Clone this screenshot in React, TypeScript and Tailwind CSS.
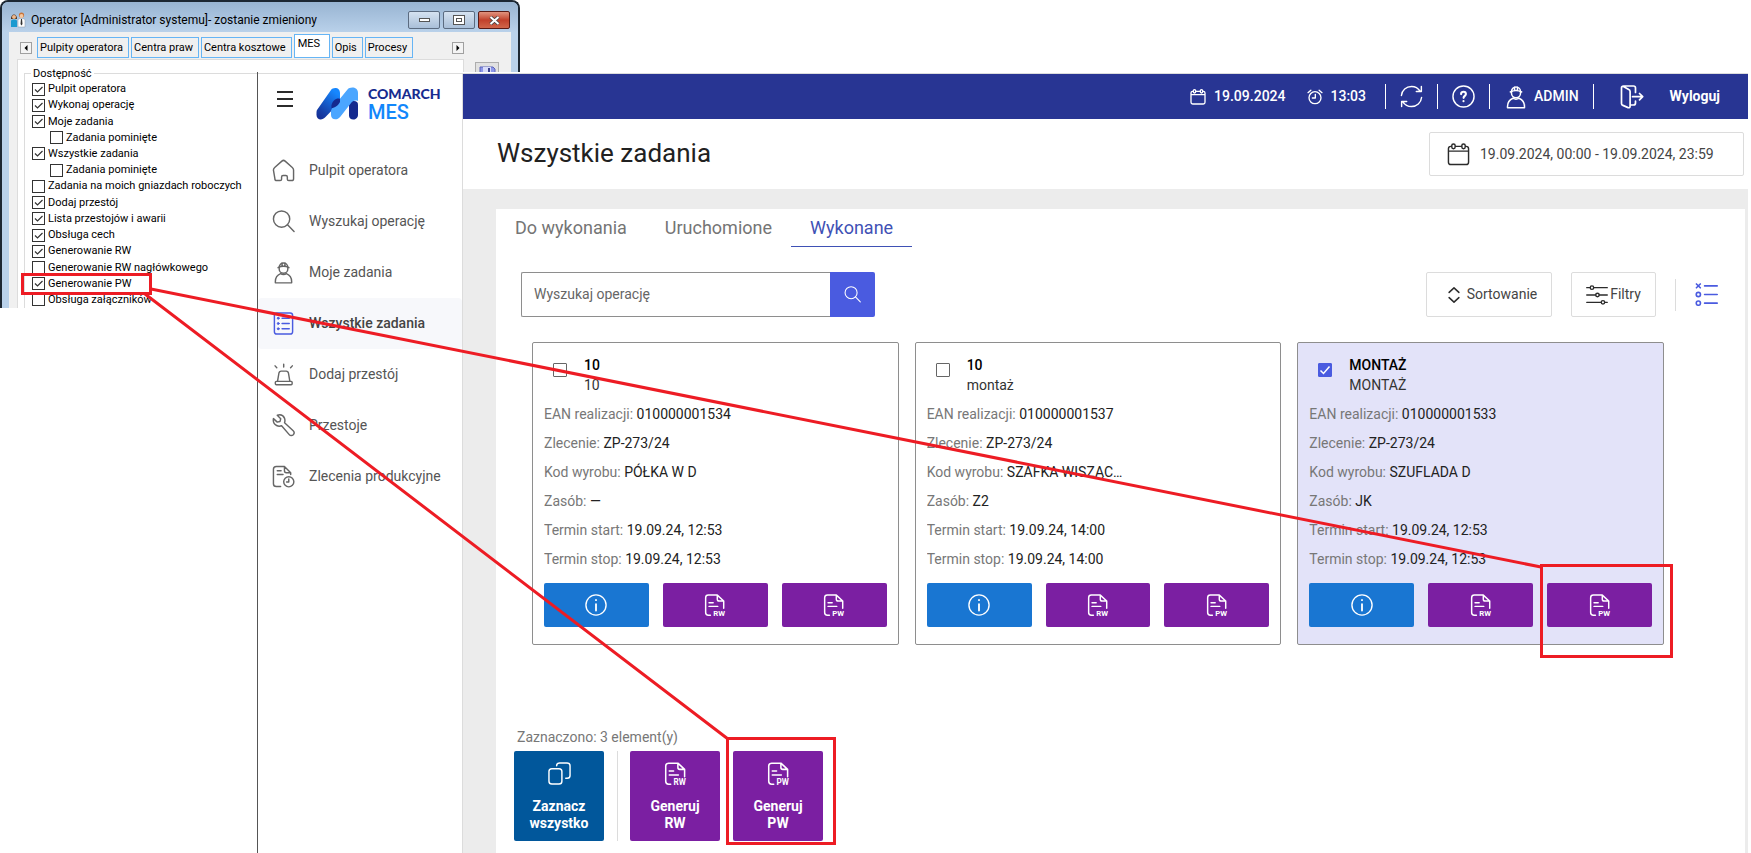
import React, { useState } from 'react';

interface IconProps {
  className?: string;
}

interface Task {
  id: string;
  name: string;
  description: string;
  ean: string;
  order: string;
  product: string;
  resource: string;
  start: string;
  stop: string;
}

interface Permission {
  label: string;
  on: boolean;
  nested?: boolean;
}

const PERMISSIONS: Permission[] = [
  { label: 'Pulpit operatora', on: true },
  { label: 'Wykonaj operację', on: true },
  { label: 'Moje zadania', on: true },
  { label: 'Zadania pominięte', on: false, nested: true },
  { label: 'Wszystkie zadania', on: true },
  { label: 'Zadania pominięte', on: false, nested: true },
  { label: 'Zadania na moich gniazdach roboczych', on: false },
  { label: 'Dodaj przestój', on: true },
  { label: 'Lista przestojów i awarii', on: true },
  { label: 'Obsługa cech', on: true },
  { label: 'Generowanie RW', on: true },
  { label: 'Generowanie RW nagłówkowego', on: false },
  { label: 'Generowanie PW', on: true },
  { label: 'Obsługa załączników', on: false },
];

const TASKS: Task[] = [
  { id: 't1', name: '10', description: '10', ean: '010000001534', order: 'ZP-273/24', product: 'PÓŁKA W D', resource: '—', start: '19.09.24, 12:53', stop: '19.09.24, 12:53' },
  { id: 't2', name: '10', description: 'montaż', ean: '010000001537', order: 'ZP-273/24', product: 'SZAFKA WISZĄC…', resource: 'Z2', start: '19.09.24, 14:00', stop: '19.09.24, 14:00' },
  { id: 't3', name: 'MONTAŻ', description: 'MONTAŻ', ean: '010000001533', order: 'ZP-273/24', product: 'SZUFLADA D', resource: 'JK', start: '19.09.24, 12:53', stop: '19.09.24, 12:53' },
];

/* ---------- icons ---------- */

const Svg: React.FC<IconProps & { children: React.ReactNode; width?: number }> = ({ className, children, width = 1.5 }) => (
  <svg className={className} viewBox="0 0 24 24" fill="none" stroke="currentColor" strokeWidth={width} strokeLinecap="round" strokeLinejoin="round" aria-hidden="true">
    {children}
  </svg>
);

const HomeIcon = ({ className }: IconProps) => (
  <Svg className={className}>
    <path d="M1.5 11.5C1.5 10.3 2 9.6 2.8 8.9L10.3 2.2c1-.9 2.4-.9 3.4 0l7.5 6.7c.8.7 1.3 1.4 1.3 2.6v9c0 1.2-.8 2-2 2h-3c-.9 0-1.5-.6-1.5-1.5v-2.2c0-.9-.6-1.5-1.5-1.500h-3c-.9 0-1.500.6-1.500 1.500V21c0 .9-.6 1.500-1.500 1.500h-3.500c-1.200 0-2-.8-2-2z" />
  </Svg>
);

const SearchIcon = ({ className }: IconProps) => (
  <Svg className={className}>
    <circle cx="10" cy="9.500" r="8.500" />
    <path d="M16.200 15.500l6.800 7" />
  </Svg>
);

const WorkerIcon = ({ className }: IconProps) => (
  <Svg className={className}>
    <path d="M7.500 6.500a4.500 4.500 0 0 1 9 0v1.800a4.500 4.500 0 0 1-9 0z" />
    <path d="M6.300 7c3.400-1.700 8-1.700 11.400 0M10.500 2.200v2.600M13.500 2.200v2.600" />
    <path d="M3.500 22.800v-1.300c0-4 2.300-7 5.500-8.300 1.800 1.200 4.200 1.200 6 0 3.200 1.300 5.500 4.300 5.500 8.300v1.300z" />
  </Svg>
);

const TaskListIcon = ({ className }: IconProps) => (
  <Svg className={className}>
    <rect x="2.500" y="1" width="19" height="22" rx="2.500" />
    <path d="M10.500 6.500h7.500M10.500 12h7.500M10.500 17.500h7.500" />
    <g fill="currentColor" strokeWidth="1">
      <circle cx="6.500" cy="6.500" r="1" />
      <circle cx="6.500" cy="12" r="1" />
      <circle cx="6.500" cy="17.500" r="1" />
    </g>
  </Svg>
);

const AlarmIcon = ({ className }: IconProps) => (
  <Svg className={className}>
    <rect x="3.500" y="19.200" width="17.500" height="3.500" rx="1" />
    <path d="M5.800 19l1.400-8.300c.2-1.300 1-2.200 2.400-2.200h5.200c1.400 0 2.200.9 2.400 2.200L18.600 19M12.200 1.300v3M3.200 3l1.800 2M21.200 3l-1.800 2" />
  </Svg>
);

const WrenchIcon = ({ className }: IconProps) => (
  <Svg className={className}>
    <path d="M1.500 4.800l4 3.700 2.800-.6.800-2.900-3.600-3.700c3-.9 6.200.1 7.500 3 .7 1.600.6 3.200.1 4.800l9 8.300c1.200 1.200 1.200 3 .1 4.200-1.200 1.200-3.100 1.200-4.200-.1l-8-9.200c-1.700.6-3.500.6-5.200-.3-2.700-1.400-3.800-4.300-3.300-7.200z" />
  </Svg>
);

const OrdersIcon = ({ className }: IconProps) => (
  <Svg className={className}>
    <path d="M9 22.500H4.500c-1.700 0-3-1.300-3-3v-15c0-1.700 1.300-3 3-3H13l6.500 6.500v2M13 1.500V6c0 1.200.8 2 2 2h4.500M5.500 6h4M5.500 10h6" />
    <circle cx="17.500" cy="17.500" r="5.300" />
    <path d="M17.500 14.700v3h-2.300" />
  </Svg>
);

const CalendarIcon = ({ className, width }: IconProps & { width?: number }) => (
  <Svg className={className} width={width}>
    <path d="M4.500 3.500h-.5c-1.500 0-2.500 1-2.500 2.500v14c0 1.500 1 2.500 2.500 2.500h16c1.500 0 2.500-1 2.500-2.500V6c0-1.500-1-2.500-2.500-2.500h-.5M9 3.500h6M1.500 8.500h21" />
    <rect x="5" y="1" width="3.500" height="5" rx="1.700" />
    <rect x="15.500" y="1" width="3.500" height="5" rx="1.700" />
  </Svg>
);

const ClockIcon = ({ className }: IconProps) => (
  <Svg className={className} width={2}>
    <circle cx="12" cy="13" r="9" />
    <path d="M12.500 8v5.500H8M1.500 5.500l4.300-3.700M22.500 5.500l-4.300-3.700" />
  </Svg>
);

const RefreshIcon = ({ className }: IconProps) => (
  <Svg className={className}>
    <path d="M1.500 11C2 5.500 6.500 1.500 12 1.500c3.800 0 7 1.800 9 5M22.300 1.500v5.300H17M22.500 13c-.5 5.500-5 9.500-10.500 9.500-3.800 0-7-1.800-9-5M1.700 22.500v-5.300H7" />
  </Svg>
);

const HelpIcon = ({ className }: IconProps) => (
  <Svg className={className}>
    <circle cx="12" cy="12" r="11" />
    <path strokeWidth="2.200" d="M9.500 9.500c0-1.500 1-2.500 2.500-2.500s2.500 1 2.500 2.400c0 1.900-2.400 1.900-2.400 4M12 16.800v.2" />
  </Svg>
);

const DoorIcon = ({ className }: IconProps) => (
  <Svg className={className} width={1.700}>
    <path d="M15.500 7.500V3c0-1.200-.8-2-2-2h-10C2.300 1 1.500 1.800 1.500 3v15.500c0 1 .5 1.600 1.400 1.900l5.200 2.200c1.200.4 2-.1 2-1.400V6.500c0-1-.4-1.600-1.400-2L3 1.300M10.500 20h3c1.200 0 2-.8 2-2v-2M12.500 11.700h10M19.500 8.500l3.200 3.200-3.200 3.200" />
  </Svg>
);

const SortIcon = ({ className }: IconProps) => (
  <Svg className={className} width={2}>
    <path d="M5.500 8.500L12 2.500l6.500 6M5.500 15.500l6.500 6 6.500-6" />
  </Svg>
);

const FilterIcon = ({ className }: IconProps) => (
  <Svg className={className}>
    <path d="M.8 4h3.700M8.500 4h14.700M.8 12h9.700M14.500 12h8.700M.8 20h15.700M20.500 20h2.700" />
    <circle cx="6.500" cy="4" r="1.900" />
    <circle cx="12.500" cy="12" r="1.900" />
    <circle cx="18.500" cy="20" r="1.900" />
  </Svg>
);

const ListModeIcon = ({ className }: IconProps) => (
  <Svg className={className} width={1.7}>
    <path d="M10 3h13.200M10 12h13.200M10 21h13.200M1.500 1l4 4M5.500 1l-4 4" />
    <circle cx="3.500" cy="12" r="2.200" />
    <circle cx="3.500" cy="21" r="2.200" />
  </Svg>
);

const InfoIcon = ({ className }: IconProps) => (
  <Svg className={className}>
    <circle cx="12" cy="12" r="11" />
    <path strokeWidth="2" d="M12 11v7M12 6.500v.2" />
  </Svg>
);

const CopyIcon = ({ className }: IconProps) => (
  <Svg className={className}>
    <rect x="1" y="7" width="13.500" height="16" rx="3" />
    <path d="M9 4c0-1.700 1.300-3 3-3h8c1.700 0 3 1.300 3 3v10c0 1.700-1.300 3-3 3h-1.500" />
  </Svg>
);

const DocIcon = ({ className, code }: IconProps & { code: string }) => (
  <Svg className={className} width={1.6}>
    <path d="M7 23.200H4.800c-1.700 0-3-1.300-3-3v-16c0-1.700 1.300-3 3-3h9.700l7 6.500v7.800M14.500 1.200v4.500c0 1.200.8 2 2 2h5M5.500 9.500h4.500M5.500 13.500h9.500" />
    <text x="10" y="24" fill="currentColor" stroke="none" fontSize="8.5" fontWeight="700" fontFamily="Roboto, sans-serif">{code}</text>
  </Svg>
);

const ComarchLogo = ({ className }: IconProps) => (
  <svg className={className} viewBox="0 0 42 33" aria-hidden="true">
    <defs>
      <linearGradient id="leg" x1="0" y1="1" x2="0.600" y2="0">
        <stop offset="0" stopColor="#152a8f" />
        <stop offset="0.300" stopColor="#1640a8" />
        <stop offset="1" stopColor="#1687ff" />
      </linearGradient>
    </defs>
    <path d="M1 23L15 3c2-2.800 9-3 9 3v9L9.500 30C6 34 0 33 .5 27c0-1.500 0-3 .5-4z" fill="url(#leg)" />
    <path d="M33 14h5c2.500 0 4 1 4 4v10c0 2-1.500 4-3.500 4.500-3 .6-5.500-1-5.500-4z" fill="#152a8f" />
    <path d="M15 25c0-1.500.3-2.500 1.200-3.800L31.500 2.500C34 -.5 42 -.5 42 6v8c-3-1-5.500 0-7.500 2.700L24.500 29.500C21 34 15 33 15 28z" fill="#4ba6ff" />
    <path d="M15.500 21c-.5-3 .5-5.500 2.500-7.500 2-2 4.500-2.300 6-1.500v3c-2 3.500-5 6-8.500 6z" fill="#152a8f" />
  </svg>
);

/* ---------- operator card window ---------- */

const WINDOW_TABS = ['Pulpity operatora', 'Centra praw', 'Centra kosztowe', 'MES', 'Opis', 'Procesy'];

const OperatorWindow: React.FC = () => (
  <section className="absolute left-0 top-0 flex h-[308px] w-[520px] flex-col overflow-hidden rounded-t-lg border-2 border-b-0 border-[#1c2733] bg-[#b9d1ea] px-[7px] font-['Roboto',sans-serif] text-[11px] leading-4 text-black">
    <header className="-mx-[7px] flex h-[30px] shrink-0 items-center bg-gradient-to-b from-[#98b4d2] to-[#b9d1ea] px-2 pt-[6px]">
      <svg className="h-4 w-4 shrink-0" viewBox="0 0 16 16" aria-hidden="true">
        <path d="M1 7c0-6 6-6 6 0z" fill="#4a2a12" />
        <circle cx="4" cy="5" r="2" fill="#f0b98c" />
        <path d="M1 15V9c0-2 6-2 6 0v6z" fill="#1b9ad0" />
        <circle cx="11.500" cy="3" r="2.600" fill="#c9743a" />
        <circle cx="11.500" cy="4" r="1.900" fill="#f6c8a0" />
        <path d="M8 15V8c0-2 7-2 7 0v7z" fill="#fff" stroke="#8894a5" strokeWidth="0.500" />
        <path d="M11 7h1l.5 5-1 1.500-1-1.500z" fill="#333" />
      </svg>
      <h2 className="ml-[5px] flex-1 text-[12px]">Operator [Administrator systemu]- zostanie zmieniony</h2>
      <div className="flex gap-[3px]">
        <button aria-label="Minimalizuj" className="flex h-[18px] w-8 items-center justify-center rounded-xs border border-[#5b6b80] bg-gradient-to-b from-[#d5e2f0] to-[#a9bfd8]">
          <span className="h-1 w-[11px] border border-[#555] bg-white" />
        </button>
        <button aria-label="Maksymalizuj" className="flex h-[18px] w-8 items-center justify-center rounded-xs border border-[#5b6b80] bg-gradient-to-b from-[#d5e2f0] to-[#a9bfd8]">
          <span className="flex h-[10px] w-[12px] items-center justify-center border border-[#555] bg-white">
            <span className="h-1 w-[6px] border border-[#555]" />
          </span>
        </button>
        <button aria-label="Zamknij" className="flex h-[18px] w-8 items-center justify-center rounded-xs border border-[#5a1a15] bg-gradient-to-b from-[#e0937f] via-[#c1402b] to-[#d0654a]">
          <svg className="h-[9px] w-[11px]" viewBox="0 0 11 9" aria-hidden="true">
            <path d="M1.500 1l8 7M9.500 1l-8 7" stroke="#444" strokeWidth="3.600" />
            <path d="M1.500 1l8 7M9.500 1l-8 7" stroke="#fff" strokeWidth="2" />
          </svg>
        </button>
      </div>
    </header>

    <div className="flex flex-1 gap-[11px] bg-[#f0f0f0] pl-2">
      <div className="flex w-[447px] flex-col">
        <nav className="flex h-[27px] items-end pb-px">
          <button aria-label="Poprzednie zakładki" className="mb-1 ml-[3px] mr-[5px] h-3 w-3 border border-[#a0a0a0] bg-[#f4f4f4]">
            <svg viewBox="0 0 10 10" aria-hidden="true"><path d="M6.500 2v6L3.500 5z" /></svg>
          </button>
          <div className="flex flex-1 items-end gap-[2px]">
            {WINDOW_TABS.map(tab => (
              <button
                key={tab}
                className={`whitespace-nowrap border border-[#66b5f5] text-left ${
                  tab === 'MES' ? 'h-6 w-9 bg-white pb-1 pl-[3px]' : 'h-[21px] bg-[#f0f0f0] pl-[2px] pr-[5px]'
                }`}
              >
                {tab}
              </button>
            ))}
          </div>
          <button aria-label="Następne zakładki" className="mb-1 h-3 w-3 border border-[#a0a0a0] bg-[#f4f4f4]">
            <svg viewBox="0 0 10 10" aria-hidden="true"><path d="M3.500 2v6l3-3z" /></svg>
          </button>
        </nav>
        <div className="flex-1 border border-b-0 border-[#dcdcdc] bg-white pl-[6px] pt-[6px]">
          <fieldset className="h-full border border-b-0 border-[#dcdcdc] pl-[7px]">
            <legend className="-ml-px h-[15px] px-[2px] leading-[15px]">Dostępność</legend>
            <div className="flex h-[227px] flex-col">
              {PERMISSIONS.map((p, i) => (
                <label key={i} className={`flex flex-1 items-center gap-[3px] ${p.nested ? 'pl-[18px]' : ''}`}>
                  <span className="relative flex h-[13px] w-[13px]">
                    <input type="checkbox" defaultChecked={p.on} className="peer h-[13px] w-[13px] appearance-none border border-[#333] bg-white" />
                    <svg className="pointer-events-none absolute inset-0 hidden peer-checked:block" viewBox="0 0 13 13" aria-hidden="true">
                      <path d="M3 6.500l2.500 2.500L10.500 4" fill="none" stroke="#333" strokeWidth="1.200" />
                    </svg>
                  </span>
                  {p.label}
                </label>
              ))}
            </div>
          </fieldset>
        </div>
      </div>
      <button aria-label="Zapisz" className="mt-[30px] flex h-6 w-6 items-center justify-center border border-[#adadad] bg-[#e1e1e1]">
        <svg className="h-[17px] w-[17px]" viewBox="0 0 17 17" aria-hidden="true">
          <path d="M1 1h13l2 2v13H1z" fill="#8d97ea" stroke="#5a62b8" />
          <path d="M4 1h8v6H4z" fill="#d8dcfa" />
          <path d="M9 2h2v4H9z" fill="#3b418f" />
        </svg>
      </button>
    </div>
  </section>
);

/* ---------- MES application ---------- */

const NAV = [
  { label: 'Pulpit operatora', Icon: HomeIcon },
  { label: 'Wyszukaj operację', Icon: SearchIcon },
  { label: 'Moje zadania', Icon: WorkerIcon },
  { label: 'Wszystkie zadania', Icon: TaskListIcon, active: true },
  { label: 'Dodaj przestój', Icon: AlarmIcon },
  { label: 'Przestoje', Icon: WrenchIcon },
  { label: 'Zlecenia produkcyjne', Icon: OrdersIcon },
];

const Sidebar: React.FC = () => (
  <aside className="w-[205px] shrink-0 border-r border-[#dcdcdc] bg-white">
    <div className="flex h-[71px] items-start gap-[23px] pl-[19px] pt-[13px]">
      <button aria-label="Menu" className="mt-1 flex w-4 flex-col gap-[5px]">
        <span className="h-0.5 bg-[#2b2b2b]" />
        <span className="h-0.5 bg-[#2b2b2b]" />
        <span className="h-0.5 bg-[#2b2b2b]" />
      </button>
      <div className="flex gap-[10px]">
        <ComarchLogo className="h-[33px] w-[42px]" />
        <div className="flex flex-col">
          <span className="font-['Lato',sans-serif] text-[14px] font-black leading-[13px] text-[#172b8f]">COMARCH</span>
          <span className="text-[20px] font-medium leading-[24px] text-[#1287fb]">MES</span>
        </div>
      </div>
    </div>
    <nav>
      {NAV.map(({ label, Icon, active }) => (
        <a
          key={label}
          href="#"
          className={`flex h-[51px] items-center gap-[14px] rounded-sm pl-[14px] text-[14px] ${
            active ? 'bg-[#f7f8fb] font-medium text-[#444]' : 'text-[#555]'
          }`}
        >
          <Icon className={`h-[23px] w-[23px] ${active ? 'text-[#4a5be0]' : 'text-[#666]'}`} />
          {label}
        </a>
      ))}
    </nav>
  </aside>
);

const Divider = () => <span className="h-[25px] w-px bg-white" />;

const TopBar: React.FC = () => (
  <header className="flex h-[45px] items-center justify-end bg-[#283593] pr-7 text-[14px] font-medium text-white">
    <CalendarIcon className="h-4 w-4" width={2} />
    <span className="ml-2">19.09.2024</span>
    <ClockIcon className="ml-[21px] h-4 w-4" />
    <span className="ml-2">13:03</span>
    <div className="ml-[19px] flex items-center gap-[14px]">
      <Divider />
      <button aria-label="Odśwież"><RefreshIcon className="h-[23px] w-[23px]" /></button>
      <Divider />
      <button aria-label="Pomoc"><HelpIcon className="h-[23px] w-[23px]" /></button>
      <Divider />
      <button className="flex items-center gap-[6px]">
        <WorkerIcon className="h-6 w-6" />
        ADMIN
      </button>
      <Divider />
    </div>
    <a href="#" className="ml-[26px] flex items-center gap-[26px] font-bold">
      <DoorIcon className="h-6 w-6" />
      Wyloguj
    </a>
  </header>
);

const Field: React.FC<{ label: string; value: string }> = ({ label, value }) => (
  <p className="h-[29px] truncate leading-[29px] text-[#222]">
    <span className="text-[#777]">{label}:</span> {value}
  </p>
);

const TaskCard: React.FC<{ task: Task; checked: boolean; onToggle: () => void }> = ({ task, checked, onToggle }) => (
  <article className={`rounded-xs border border-[#8e8e8e] px-[11px] pb-[17px] pt-3 text-[14px] ${checked ? 'bg-[#e3e3f9]' : 'bg-white'}`}>
    <label className="flex gap-[17px] pl-[9px]">
      <span className="relative mt-2 flex h-[14px] w-[14px]">
        <input
          type="checkbox"
          checked={checked}
          onChange={onToggle}
          className="h-[14px] w-[14px] appearance-none rounded-[1px] border border-[#666] bg-white checked:border-[#4a5be0] checked:bg-[#4a5be0]"
        />
        {checked && (
          <svg className="pointer-events-none absolute inset-0" viewBox="0 0 14 14" aria-hidden="true">
            <path d="M2.500 7.500l3 3 6-7" fill="none" stroke="#fff" strokeWidth="1.500" />
          </svg>
        )}
      </span>
      <span className="flex flex-col leading-5">
        <span className="font-medium text-black">{task.name}</span>
        <span className="text-[#333]">{task.description}</span>
      </span>
    </label>
    <div className="mt-[5px]">
      <Field label="EAN realizacji" value={task.ean} />
      <Field label="Zlecenie" value={task.order} />
      <Field label="Kod wyrobu" value={task.product} />
      <Field label="Zasób" value={task.resource} />
      <Field label="Termin start" value={task.start} />
      <Field label="Termin stop" value={task.stop} />
    </div>
    <div className="mt-[9px] grid grid-cols-3 gap-[14px] text-white">
      <button aria-label="Szczegóły" className="flex h-11 items-center justify-center rounded-xs bg-[#1976d2]">
        <InfoIcon className="h-[22px] w-[22px]" />
      </button>
      <button aria-label="Generuj RW" className="flex h-11 items-center justify-center rounded-xs bg-[#7b1fa2]">
        <DocIcon code="RW" className="h-[22px] w-[22px] overflow-visible" />
      </button>
      <button aria-label="Generuj PW" className="flex h-11 items-center justify-center rounded-xs bg-[#7b1fa2]">
        <DocIcon code="PW" className="h-[22px] w-[22px] overflow-visible" />
      </button>
    </div>
  </article>
);

// red frames and connectors linking the permission with its buttons
const Callouts: React.FC = () => (
  <svg className="pointer-events-none absolute left-0 top-0 h-[853px] w-[1751px]" fill="none" stroke="#ed1c24" strokeWidth="3" aria-hidden="true">
    <rect x="22.500" y="274.500" width="128" height="19" />
    <rect x="1541.500" y="565.500" width="130" height="91" />
    <rect x="727.500" y="738.500" width="107" height="105" />
    <path d="M151 289L1541 567M145 294L728 739" />
  </svg>
);

const App: React.FC = () => {
  const [tab, setTab] = useState('Wykonane');
  const [selected, setSelected] = useState<string[]>(['t3']);

  const toggle = (id: string) =>
    setSelected(prev => (prev.includes(id) ? prev.filter(x => x !== id) : [...prev, id]));

  return (
    <div className="relative flex min-h-screen bg-white pl-[257px] pr-[3px] pt-[72px] font-['Roboto',sans-serif]">
      <OperatorWindow />

      <div className="relative flex flex-1 border-l border-[#555] bg-white pt-px">
        <div className="flex flex-1 border-t border-[#dcdcdc]">
          <Sidebar />
          <div className="flex min-w-0 flex-1 flex-col bg-[#ececec]">
            <TopBar />
            <div className="flex h-[70px] items-center justify-between bg-white pl-[34px] pr-1">
              <h1 className="pb-[2px] text-[26px] text-[#212121]">Wszystkie zadania</h1>
              <button className="flex h-11 w-[315px] items-center gap-[10px] rounded-xs border border-[#dcdcdc] pl-[17px] text-[14px] text-[#444]">
                <CalendarIcon className="h-[23px] w-[23px] text-[#2b2b2b]" />
                19.09.2024, 00:00 - 19.09.2024, 23:59
              </button>
            </div>

            <main className="ml-[33px] mr-[3px] mt-5 flex-1 bg-white">
              <div className="flex h-[38px] text-[18px]">
                {['Do wykonania', 'Uruchomione', 'Wykonane'].map(name => (
                  <button
                    key={name}
                    onClick={() => setTab(name)}
                    className={`border-b px-[19px] ${tab === name ? 'border-[#3f51b5] text-[#3f51b5]' : 'border-transparent text-[#757575]'}`}
                  >
                    {name}
                  </button>
                ))}
              </div>

              <div className="mt-[25px] flex items-center pl-[25px] pr-[27px] text-[14px]">
                <form className="flex h-[45px] w-[354px]" onSubmit={e => e.preventDefault()}>
                  <input
                    type="text"
                    aria-label="Wyszukaj operację"
                    placeholder="Wyszukaj operację"
                    className="min-w-0 flex-1 rounded-l-xs border border-r-0 border-[#8e8e8e] px-3 outline-none placeholder:text-[#666]"
                  />
                  <button aria-label="Szukaj" className="flex w-[45px] items-center justify-center rounded-r-xs bg-[#4a5be0] text-white">
                    <SearchIcon className="h-[17px] w-[17px]" />
                  </button>
                </form>
                <div className="ml-auto flex items-center gap-[19px] text-[#444]">
                  <button className="flex h-[45px] w-[126px] items-center justify-center gap-1 rounded-xs border border-[#dcdcdc] pl-1">
                    <SortIcon className="h-[18px] w-[18px] text-[#2b2b2b]" />
                    Sortowanie
                  </button>
                  <button className="flex h-[45px] w-[85px] items-center justify-center gap-[2px] rounded-xs border border-[#dcdcdc]">
                    <FilterIcon className="h-[22px] w-[22px] text-[#2b2b2b]" />
                    Filtry
                  </button>
                  <span className="h-8 w-px bg-[#dcdcdc]" />
                  <button aria-label="Zaznaczanie">
                    <ListModeIcon className="h-[23px] w-[23px] text-[#4a5be0]" />
                  </button>
                </div>
              </div>

              <div className="mt-[25px] grid grid-cols-3 gap-4 pl-9 pr-[81px]">
                {TASKS.map(t => (
                  <TaskCard key={t.id} task={t} checked={selected.includes(t.id)} onToggle={() => toggle(t.id)} />
                ))}
              </div>

              <div className="mt-[82px] pl-[18px]">
                <p className="pl-[3px] text-[14px] leading-5 text-[#777]">Zaznaczono: 3 element(y)</p>
                <div className="mt-1 flex gap-[13px] text-[14px] font-bold leading-[17px] text-white">
                  <button className="flex h-[90px] w-[90px] flex-col items-center rounded-xs bg-[#01579b] pt-[11px]">
                    <CopyIcon className="mb-[13px] h-[23px] w-[23px]" />
                    Zaznacz wszystko
                  </button>
                  <span className="w-px bg-[#dcdcdc]" />
                  <div className="-ml-px flex gap-[13px]">
                    <button className="flex h-[90px] w-[90px] flex-col items-center rounded-xs bg-[#7b1fa2] px-4 pt-[11px]">
                      <DocIcon code="RW" className="mb-[13px] h-[23px] w-[23px] overflow-visible" />
                      Generuj RW
                    </button>
                    <button className="flex h-[90px] w-[90px] flex-col items-center rounded-xs bg-[#7b1fa2] px-4 pt-[11px]">
                      <DocIcon code="PW" className="mb-[13px] h-[23px] w-[23px] overflow-visible" />
                      Generuj PW
                    </button>
                  </div>
                </div>
              </div>
            </main>
          </div>
        </div>
      </div>

      <Callouts />
    </div>
  );
};

export default App;
